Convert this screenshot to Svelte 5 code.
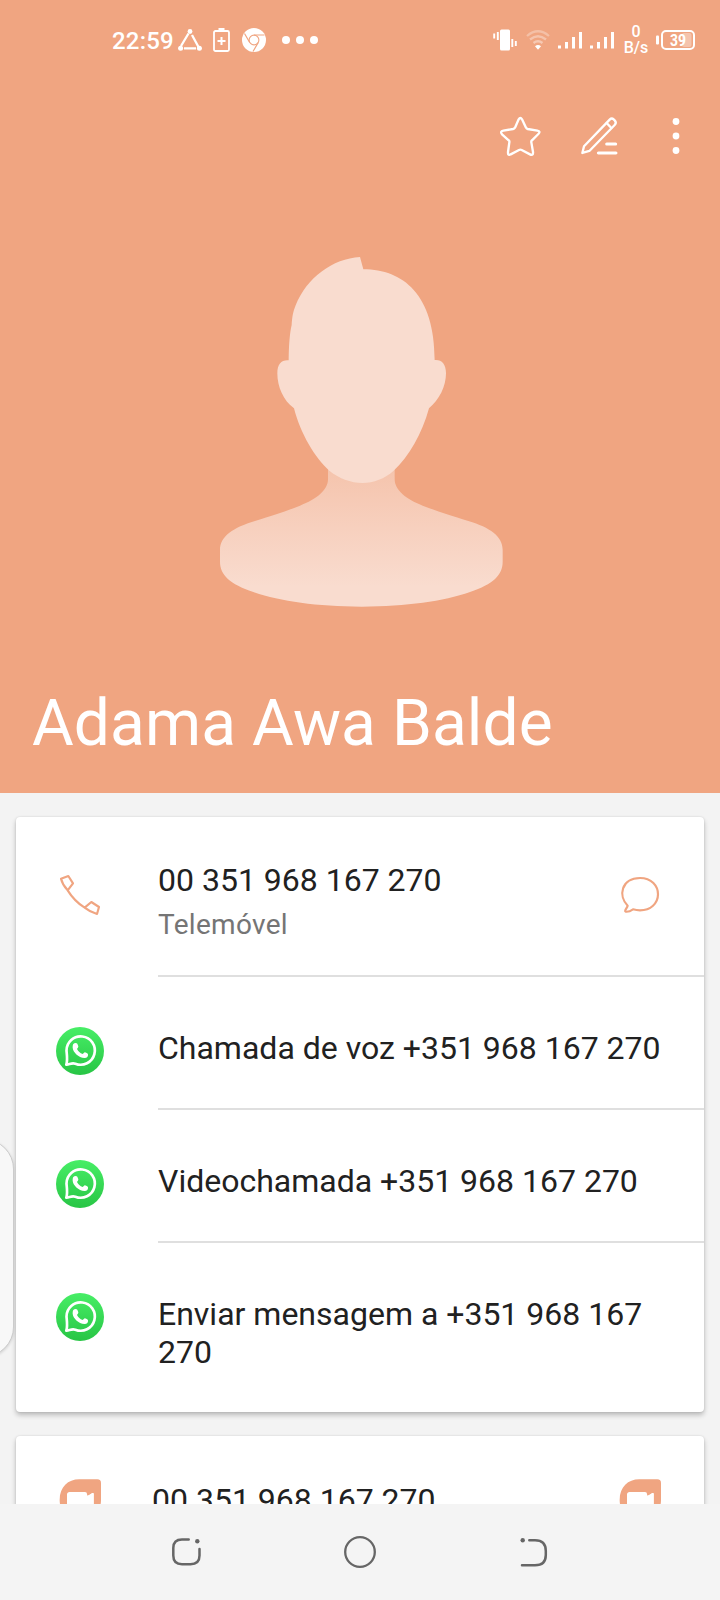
<script>
    const name = 'Adama Awa Balde'
    const phone = '00 351 968 167 270'

    const actions = [
        'Chamada de voz +351 968 167 270',
        'Videochamada +351 968 167 270',
        'Enviar mensagem a +351 968 167 270',
    ]
</script>

{#snippet signal()}
    <svg class="signal" viewBox="0 0 24 20">
        <path d="M1.5 15.5v3M8.500 12v6.500M15.500 7v11.500M22.500 2v16.500" fill="none" stroke="#fff" stroke-width="3" />
    </svg>
{/snippet}

{#snippet whatsapp()}
    <svg class="rowIcon" viewBox="0 0 144 144">
        <defs>
            <linearGradient id="wa" x1="0" y1="0" x2="0" y2="1">
                <stop offset="0" stop-color="#47ee66" />
                <stop offset="1" stop-color="#28c545" />
            </linearGradient>
        </defs>
        <circle cx="72" cy="72" r="72" fill="url(#wa)" />
        <path d="M31 113C35 101 34 94 31.500 71A42.500 42.500 0 1 1 58 110C48 107 43 111 31 113Z" fill="none" stroke="#fff" stroke-width="8" stroke-linejoin="round" />
        <path d="M52 51C55 47 62 47 64 50L67 58C67 61 65 64 63 66C67 74 72 78 80 81L86 76C90 77 95 79 96 82C97 89 93 93 86 93C67 92 51 75 50 62C50 58 50 54 52 51Z" fill="#fff" />
    </svg>
{/snippet}

{#snippet video()}
    <svg class="videoIcon" viewBox="0 0 126 126">
        <path d="M2 63C2 24 27 1 61 1H115Q126 1 126 12V63C126 101 98 124 63 124S2 101 2 63ZM32 39Q24 39 24 47V79Q24 87 32 87H76Q84 87 84 79V75L98 84Q104 86 104 80V46Q104 41 99 42L87 51Q84 51 84 45Q84 39 78 39Z" fill="#f0a581" fill-rule="evenodd" />
        <path d="M83 51L104 42V84H83Z" fill="#fff" />
    </svg>
{/snippet}

<div class="screen">
    <header>
        <div class="statusBar">
            <div class="left">
                <span class="time">22:59</span>
                <svg class="share" viewBox="0 0 24 22">
                    <path d="M10.500 4.500L3 17M14 6l6.500 12M6 19.300h12" fill="none" stroke="#fff" stroke-width="2.300" />
                    <circle cx="12" cy="2.500" r="2.400" fill="#fff" />
                    <circle cx="2.600" cy="19.300" r="2.500" fill="#fff" />
                    <circle cx="21.400" cy="19.300" r="2.500" fill="#fff" />
                </svg>
                <svg class="saver" viewBox="0 0 17 24">
                    <rect x="1" y="3" width="15" height="20" rx="1.500" fill="none" stroke="#fff" stroke-width="1.800" />
                    <path d="M5.500 0h6v3h-6z" fill="#fff" />
                    <path d="M8.500 9v8M4.500 13h8" stroke="#fff" stroke-width="2" />
                </svg>
                <svg class="chrome" viewBox="0 0 24 24">
                    <circle cx="12" cy="12" r="12" fill="#fff" />
                    <circle cx="12" cy="12" r="4.900" fill="none" stroke="#f0a581" stroke-width="1.100" />
                    <path d="M12 7h10.500M7.700 14.500L2.500 5.500M16.300 14.500L11 23.500" stroke="#f0a581" stroke-width="1.200" />
                </svg>
                <svg class="more" viewBox="0 0 36 8">
                    <circle cx="4" cy="4" r="4" fill="#fff" />
                    <circle cx="18" cy="4" r="4" fill="#fff" />
                    <circle cx="32" cy="4" r="4" fill="#fff" />
                </svg>
            </div>
            <div class="right">
                <svg class="vibrate" viewBox="0 0 24 22">
                    <rect x="7" y="0.500" width="10" height="21" rx="1.500" fill="#fff" />
                    <path d="M1.200 4.500v5M4.800 3v8M19.300 10v8M22.800 12v5" stroke="#fff" stroke-width="1.900" />
                </svg>
                <svg class="wifi" viewBox="0 0 24 20">
                    <g fill="none" stroke="#fff" stroke-width="2.300">
                        <path d="M1 6Q12-3.500 23 6" opacity=".3" />
                        <path d="M4 9.500Q12 3 20 9.500" opacity=".35" />
                        <path d="M7.500 13Q12 9.500 16.500 13" opacity=".4" />
                    </g>
                    <path d="M9 16.200Q12 14 15 16.200L12 19.700Z" fill="#fff" />
                </svg>
                {@render signal()}
                {@render signal()}
                <div class="speed"><span>0</span><span>B/s</span></div>
                <svg class="battery" viewBox="0 0 40 20">
                    <rect x="0" y="5.500" width="3" height="9" rx="1" fill="#fff" />
                    <rect x="26" y="3" width="9.500" height="14" rx="2" fill="#fff" opacity=".35" />
                    <rect x="6" y="1" width="32" height="18" rx="4" fill="none" stroke="#fff" stroke-width="2" />
                    <text x="14" y="15.500" textLength="16" lengthAdjust="spacingAndGlyphs">39</text>
                </svg>
            </div>
        </div>

        <div class="toolbar">
            <svg class="star" viewBox="56 46 128 122">
                <path d="M115 56Q120 48 125 56L137 81Q138 84 142 85L171 90Q182 92 174 100L155 119Q152 121 153 125L158 154Q159 166 149 161L124 148Q120 146 116 148L91 161Q82 166 83 154L87 125Q88 121 85 119L65 101Q58 92 69 90L98 85Q102 84 104 81Z" fill="none" stroke="#fff" stroke-width="7" stroke-linejoin="round" />
            </svg>
            <svg class="edit" viewBox="300 46 116 118">
                <g fill="none" stroke="#fff" stroke-width="7" stroke-linejoin="round" stroke-linecap="round">
                    <path d="M312 137L389 57Q395 51 401 56L404 59Q411 66 404 73L328 151L307 157Z" />
                    <path d="M380 67L394 82" />
                    <path d="M380 130H407M355 157H408" stroke-width="9" />
                </g>
            </svg>
            <svg class="menu" viewBox="0 0 8 38">
                <circle cx="4" cy="4.500" r="3.400" fill="#fff" />
                <circle cx="4" cy="19" r="3.400" fill="#fff" />
                <circle cx="4" cy="33.500" r="3.400" fill="#fff" />
            </svg>
        </div>

        <svg class="avatar" viewBox="0 0 960 1140">
            <defs>
                <linearGradient id="body" gradientUnits="userSpaceOnUse" x1="0" y1="690" x2="0" y2="1040">
                    <stop offset="0" stop-color="#f5c4ad" />
                    <stop offset="1" stop-color="#f9dccf" />
                </linearGradient>
            </defs>
            <path d="M384 680V718C384 750 350 778 300 797C250 817 220 826 165 843C100 863 60 888 60 930V965C60 1005 90 1032 160 1056C240 1084 350 1099 485 1100C620 1099 730 1084 810 1056C880 1032 908 1005 908 965V930C908 888 870 863 805 843C750 826 720 817 668 797C618 778 584 750 584 718V680Z" fill="url(#body)" />
            <path d="M480 51L490 88C610 88 704 165 704 360C724 358 738 371 738 400C738 438 718 480 687 505C666 582 627 650 580 693C555 716 520 729 488 729C452 729 416 714 388 692C345 654 301 580 282 505C250 482 232 440 232 400C232 372 245 359 266 361C266 320 269 280 275 255C276 230 280 213 287 196C320 113 398 56 480 51Z" fill="#f9dccf" />
        </svg>

        <h1>{name}</h1>
    </header>

    <main>
        <section class="card">
            <div class="row first">
                <svg class="rowIcon" viewBox="168 183 144 144">
                    <path d="M183 206L205 198L219 220L203 241C191 228 185 214 183 206ZM203 241C216 262 232 279 254 293L274 276L297 291L291 312C276 308 264 301 254 293" fill="none" stroke="#f0a581" stroke-width="6.500" stroke-linejoin="round" />
                </svg>
                <div class="text">
                    <p>{phone}</p>
                    <p class="label">Telemóvel</p>
                </div>
                <svg class="sms" viewBox="780 198 120 114">
                    <path d="M803 287C774 258 783 205 840 204C875 204 894 228 894 253C894 280 872 301 840 301C832 301 826 300 819 298C812 303 806 306 797 305C792 302 801 295 803 287Z" fill="none" stroke="#f0a581" stroke-width="6.500" stroke-linejoin="round" />
                </svg>
            </div>
            {#each actions as action}
                <div class="row">
                    {@render whatsapp()}
                    <div class="text"><p>{action}</p></div>
                </div>
            {/each}
        </section>

        <section class="card">
            <div class="row duo">
                {@render video()}
                <div class="text"><p>{phone}</p></div>
                {@render video()}
            </div>
        </section>
    </main>

    <nav>
        <svg viewBox="0 0 32 32">
            <path d="M18.700 3.500H12Q3.300 3.500 3.300 12V19.500Q3.300 28.200 12 28.200H20.500Q29.500 28.200 29.500 19.500V13" fill="none" stroke="#666" stroke-width="2.500" stroke-linecap="round" />
            <circle cx="27.300" cy="5.300" r="2.200" fill="#666" />
        </svg>
        <svg viewBox="0 0 32 32">
            <circle cx="16" cy="16" r="14.800" fill="none" stroke="#666" stroke-width="2.300" />
        </svg>
        <svg viewBox="0 0 32 32">
            <path d="M11.300 4.300H17Q27.800 4.300 27.800 15V19Q27.800 29.300 17 29.300H4" fill="none" stroke="#666" stroke-width="2.500" stroke-linecap="round" />
            <circle cx="4.700" cy="4.200" r="2.200" fill="#666" />
        </svg>
    </nav>

    <div class="edgeHandle"></div>
</div>

<style>
    :global(body) {
        margin: 0;
    }
    .screen {
        position: relative;
        display: flex;
        flex-direction: column;
        width: 720px;
        height: 1600px;
        overflow: hidden;
        background: #f3f3f3;
        color: #212121;
        font-family: Roboto, sans-serif;
    }
    svg {
        display: block;
        flex: none;
    }
    header {
        display: flex;
        flex-direction: column;
        flex: none;
        height: 793px;
        background: #f0a581;
        color: #fff;
    }
    .statusBar {
        display: flex;
        justify-content: space-between;
        height: 80px;
        padding: 0 24px 0 112px;
    }
    .left, .right {
        display: flex;
        align-items: center;
    }
    .time {
        width: 66px;
        font-size: 24px;
        font-weight: 500;
        line-height: 28px;
        letter-spacing: .2px;
        margin-top: 1px;
    }
    .share {
        width: 24px;
        height: 22px;
    }
    .saver {
        width: 17px;
        height: 24px;
        margin-left: 11px;
    }
    .chrome {
        width: 24px;
        height: 24px;
        margin-left: 12px;
    }
    .more {
        width: 36px;
        height: 8px;
        margin-left: 16px;
    }
    .vibrate {
        width: 24px;
        height: 22px;
    }
    .wifi {
        width: 24px;
        height: 20px;
        margin-left: 9px;
    }
    .signal {
        width: 24px;
        height: 20px;
        margin-left: 8px;
    }
    .speed {
        display: flex;
        flex-direction: column;
        align-items: center;
        width: 26px;
        margin: 0 7px 0 9px;
        font-size: 16px;
        font-weight: 500;
        line-height: 16px;
    }
    .battery {
        width: 40px;
        height: 20px;
    }
    .battery text {
        font-size: 16px;
        font-weight: 700;
        fill: #fff;
    }
    .toolbar {
        display: flex;
        justify-content: flex-end;
        align-items: center;
        height: 112px;
        padding-right: 40px;
    }
    .star {
        width: 42.700px;
        height: 40.700px;
    }
    .edit {
        width: 38.700px;
        height: 39.300px;
        margin: 0 53.300px 0 38.700px;
    }
    .menu {
        width: 8px;
        height: 38px;
    }
    .avatar {
        width: 320px;
        height: 380px;
        margin: 48px auto 0;
    }
    h1 {
        margin: 66px 0 0 32px;
        font-size: 64px;
        font-weight: 400;
        line-height: 75px;
        letter-spacing: .1px;
    }
    main {
        display: flex;
        flex-direction: column;
        gap: 24px;
        height: 687px;
        padding: 24px 16px 0;
        overflow: hidden;
    }
    .card {
        flex: none;
        background: #fff;
        border-radius: 4px;
        box-shadow: 0 3px 5px rgba(0, 0, 0, .24), 0 0 2px rgba(0, 0, 0, .12);
    }
    .row {
        position: relative;
        display: flex;
        align-items: flex-start;
        min-height: 133px;
        box-sizing: border-box;
        padding: 50px 32px 0 40px;
    }
    .row:not(:last-child)::after {
        content: '';
        position: absolute;
        left: 142px;
        right: 0;
        bottom: 0;
        height: 2px;
        background: #dfdfdf;
    }
    .row:last-child {
        min-height: 169px;
    }
    .row.first {
        min-height: 160px;
        padding: 54px 40px 0;
    }
    .row.duo {
        padding: 43px 43px 0 43px;
    }
    .rowIcon {
        width: 48px;
        height: 48px;
    }
    .videoIcon {
        width: 42px;
        height: 42px;
    }
    .sms {
        width: 40px;
        height: 38px;
        margin-top: 5px;
        margin-right: 4px;
    }
    .text {
        flex: 1;
        margin: 3px 0 0 54px;
    }
    .first .text {
        margin-top: -9px;
    }
    .duo .text {
        margin: 3px 0 0 51px;
    }
    p {
        margin: 0;
        font-size: 32px;
        line-height: 37.500px;
    }
    .label {
        margin-top: 8px;
        font-size: 28px;
        line-height: 33px;
        letter-spacing: .3px;
        color: #757575;
    }
    nav {
        display: flex;
        justify-content: center;
        align-items: center;
        gap: 142px;
        height: 96px;
        background: #f4f4f4;
    }
    nav svg {
        width: 32px;
        height: 32px;
    }
    .edgeHandle {
        position: absolute;
        left: -47px;
        top: 1139px;
        width: 61px;
        height: 218px;
        box-sizing: border-box;
        border: 1px solid #ccc;
        border-radius: 30px;
        background: #f8f8f8;
        box-shadow: 0 1px 3px rgba(0, 0, 0, .15);
    }
</style>
